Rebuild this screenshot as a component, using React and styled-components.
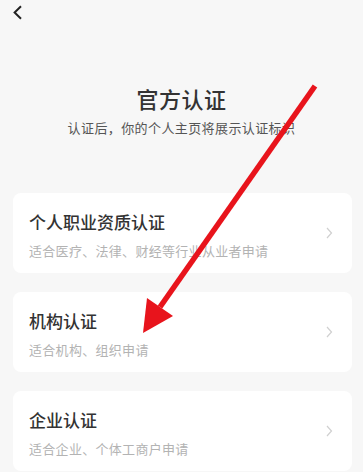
import styled, { createGlobalStyle } from "styled-components";

const GlobalStyle = createGlobalStyle`
  html, body {
    margin: 0;
    padding: 0;
    background: #f7f7f7;
  }
  body {
    font-family: "Noto Sans CJK SC", "Noto Sans", sans-serif;
  }
`;

const Page = styled.div`
  position: relative;
  width: 363px;
  height: 472px;
  overflow: hidden;
  background: #f7f7f7;
`;

const TopBar = styled.div`
  height: 26px;
  display: flex;
  align-items: flex-start;
  padding-left: 9px;
`;

const BackBtn = styled.button`
  border: none;
  background: none;
  padding: 0;
  margin-top: 4px;
  width: 16px;
  height: 16px;
  display: flex;
  align-items: center;
  justify-content: center;
`;

const Header = styled.div`
  margin-top: 57px;
  display: flex;
  flex-direction: column;
  align-items: center;
  gap: 6px;
`;

const Title = styled.h1`
  margin: 0;
  font-size: 22px;
  line-height: 30px;
  font-weight: 500;
  color: #333;
  letter-spacing: 0.5px;
`;

const SubTitle = styled.p`
  margin: 0;
  font-size: 13px;
  line-height: 18px;
  color: #555;
  letter-spacing: 0.4px;
`;

const CardList = styled.div`
  margin-top: 56px;
  padding: 0 11px 0 13px;
  display: flex;
  flex-direction: column;
  gap: 19px;
`;

const Card = styled.div`
  height: 80px;
  background: #fff;
  border-radius: 8px;
  display: flex;
  align-items: flex-start;
  justify-content: space-between;
  padding: 17px 19px 0 16px;
  box-sizing: border-box;
`;

const CardText = styled.div`
  display: flex;
  flex-direction: column;
`;

const CardTitle = styled.div`
  font-size: 17px;
  line-height: 24px;
  font-weight: 500;
  color: #333;
`;

const CardDesc = styled.div`
  margin-top: 8px;
  font-size: 13px;
  line-height: 18px;
  color: #b3b3b3;
  letter-spacing: 0.3px;
`;

const Chevron = styled.svg`
  align-self: center;
  margin-top: -17px;
`;

const ArrowLayer = styled.svg`
  position: absolute;
  left: 0;
  top: 0;
  pointer-events: none;
`;

const items = [
  { title: "个人职业资质认证", desc: "适合医疗、法律、财经等行业从业者申请" },
  { title: "机构认证", desc: "适合机构、组织申请" },
  { title: "企业认证", desc: "适合企业、个体工商户申请" },
];

export default function App() {
  return (
    <>
      <GlobalStyle />
      <Page>
        <TopBar>
          <BackBtn>
            <svg width="11" height="15" viewBox="0 0 11 15">
              <path
                d="M9 1.2 L2.6 7.5 L9 13.8"
                fill="none"
                stroke="#222"
                strokeWidth="2"
              />
            </svg>
          </BackBtn>
        </TopBar>
        <Header>
          <Title>官方认证</Title>
          <SubTitle>认证后，你的个人主页将展示认证标识</SubTitle>
        </Header>
        <CardList>
          {items.map((it) => (
            <Card key={it.title}>
              <CardText>
                <CardTitle>{it.title}</CardTitle>
                <CardDesc>{it.desc}</CardDesc>
              </CardText>
              <Chevron width="7" height="12" viewBox="0 0 7 12">
                <path
                  d="M1 1 L5.5 6 L1 11"
                  fill="none"
                  stroke="#d0d0d0"
                  strokeWidth="1.2"
                />
              </Chevron>
            </Card>
          ))}
        </CardList>
        {/* red annotation arrow over the page */}
        <ArrowLayer width="363" height="472">
          <line
            x1="315"
            y1="86"
            x2="160"
            y2="307"
            stroke="#e8141c"
            strokeWidth="5.5"
          />
          <polygon points="143,333 147,298 173,316" fill="#e8141c" />
        </ArrowLayer>
      </Page>
    </>
  );
}
